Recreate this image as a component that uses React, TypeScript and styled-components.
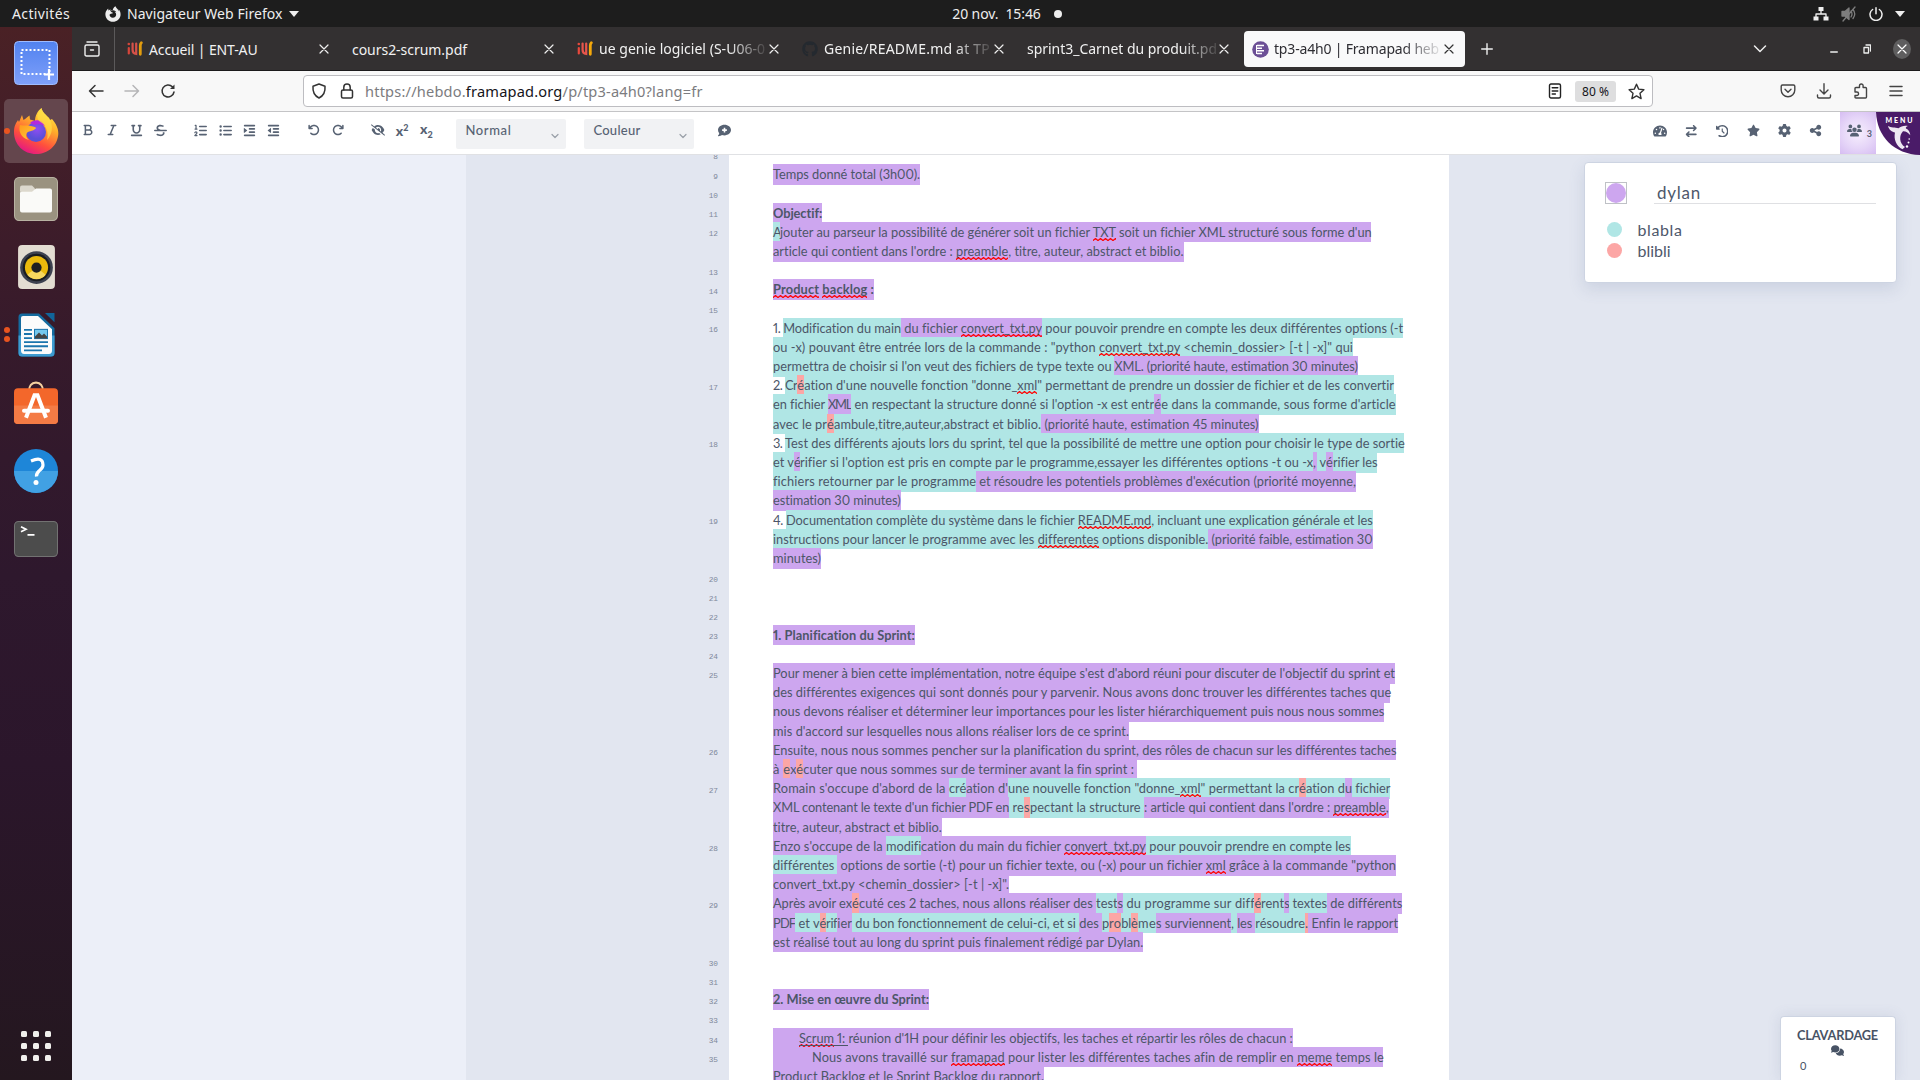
import React, { useLayoutEffect, useRef, useState } from "react";
import styled, { createGlobalStyle, css } from "styled-components";
import {
  FaBold, FaItalic, FaUnderline, FaStrikethrough, FaListOl, FaListUl, FaIndent, FaOutdent,
  FaArrowRotateLeft, FaArrowRotateRight, FaEyeSlash, FaCommentMedical,
  FaArrowRightArrowLeft, FaClockRotateLeft, FaStar, FaGear, FaShareNodes, FaUsers, FaComments,
  FaFirefoxBrowser, FaGithub,
} from "react-icons/fa6";
import { FaTachometerAlt } from "react-icons/fa";

const ui = `"Noto Sans", "Open Sans", sans-serif`;
const pad = `Lato, "Open Sans", sans-serif`;

const Global = createGlobalStyle`
  * { box-sizing: border-box; }
  html, body { margin: 0; padding: 0; overflow: hidden; }
  svg { display: block; flex: none; }
`;

/* ---------- text fitted to a given advance width ---------- */
const FitBox = styled.span<{ $w: number }>`
  display: inline-block;
  width: ${(p) => p.$w}px;
  flex: none;
  white-space: pre;
`;

function Fit({ w, n, children }: { w: number; n: number; children: React.ReactNode }) {
  const ref = useRef<HTMLSpanElement>(null);
  const [ls, setLs] = useState(0);
  useLayoutEffect(() => {
    if (ref.current) setLs((w - ref.current.getBoundingClientRect().width) / Math.max(n, 1));
  }, []);
  return (
    <FitBox $w={w}>
      <span ref={ref} style={{ letterSpacing: ls }}>{children}</span>
    </FitBox>
  );
}
const Label = ({ w, children }: { w: number; children: string }) => (
  <Fit w={w} n={children.length}>{children}</Fit>
);

/* ---------- desktop shell ---------- */
const Screen = styled.div`
  width: 1920px; height: 1080px; overflow: hidden;
  display: flex; flex-direction: column;
  font-family: ${ui};
`;
const TopBar = styled.header`
  height: 27px; background: #1d1d1d; color: #eee; flex: none;
  display: grid; grid-template-columns: 1fr auto 1fr; align-items: center;
  font-size: 14px; line-height: 27px;
`;
const TopLeft = styled.div`display: flex; align-items: center; padding-left: 12px;`;
const AppMenu = styled.div`display: flex; align-items: center; margin-left: 35px; gap: 6px;`;
const Clock = styled.div`display: flex; align-items: center; gap: 13px; padding-left: 94px;`;
const Dot = styled.i<{ $s: number; $c: string }>`
  width: ${(p) => p.$s}px; height: ${(p) => p.$s}px; border-radius: 50%; background: ${(p) => p.$c}; flex: none; display: block;
`;
const Tray = styled.div`display: flex; align-items: center; justify-content: flex-end; padding-right: 15px; gap: 12px;`;
const Caret = styled.i`
  border: 5px solid transparent; border-top: 6px solid #eee; border-bottom: 0; display: block;
`;
const Desktop = styled.div`flex: 1; display: flex; min-height: 0;`;

const Dock = styled.nav`
  width: 72px; flex: none; padding-top: 1.5px;
  background: linear-gradient(#4a2125 0%, #421e29 12%, #361a2b 30%, #2e182d 52%, #2b162b 70%, #24171f 100%);
  display: flex; flex-direction: column; align-items: center;
`;
const DockSlot = styled.div<{ $on?: boolean }>`
  position: relative; height: 68px; flex: none; width: 72px; display: flex; align-items: center; justify-content: center;
  ${(p) => p.$on && css`&::before { content: ""; position: absolute; inset: 2px 4px; border-radius: 5px; background: #64464d; }`}
  svg { position: relative; }
`;
const Running = styled.div`
  position: absolute; left: 3.5px; top: 0; bottom: 0; display: flex; flex-direction: column; justify-content: center; gap: 3px;
`;
const AppGrid = styled.div`
  margin-top: auto; margin-bottom: 19px; display: grid; grid-template-columns: repeat(3, 6px); gap: 6px;
  i { height: 6px; border-radius: 1.5px; background: #f0efec; }
`;

/* ---------- browser ---------- */
const Browser = styled.main`flex: 1; display: flex; flex-direction: column; min-width: 0; position: relative;`;
const TabBar = styled.div`
  height: 44px; flex: none; background: #333031; border-bottom: 1px solid #1c1b1c; display: flex; align-items: center; color: #f3f3f3;
`;
const Sidebar = styled.div`
  width: 43px; height: 44px; border-right: 1px solid #5c5a5b; display: flex; align-items: center; justify-content: center; margin-right: 4px; padding-right: 2px;
`;
const Tab = styled.div<{ $on?: boolean }>`
  width: ${(p) => (p.$on ? 221 : 225)}px; height: 36px; border-radius: 4px; display: flex; align-items: center;
  padding: 1px 0 0 8px; font-size: 14px; flex: none;
  background: ${(p) => (p.$on ? "#f9f9fa" : "transparent")}; color: ${(p) => (p.$on ? "#2e2d33" : "#f1f1f1")};
`;
const Fav = styled.span`width: 22px; display: flex;`;
const TabText = styled.span`
  white-space: pre; line-height: 24px;
  mask-image: linear-gradient(to right, #000 calc(100% - 36px), rgba(0, 0, 0, 0.12) 100%);
`;
const TabClose = styled.span<{ $pr?: number }>`margin-left: auto; padding-right: ${(p) => p.$pr ?? 15}px; display: flex;`;
const TabButton = styled.span<{ $ml: number }>`margin-left: ${(p) => p.$ml}px; display: flex;`;
const RoundClose = styled.span`
  margin-left: 22px; width: 18px; height: 20px; border-radius: 50%; background: #5f5e5f; display: flex; align-items: center; justify-content: center;
`;
const NavBar = styled.div`
  height: 41px; flex: none; background: #f8f8f8; border-bottom: 1px solid #c4c4c6; display: flex; align-items: center; padding-left: 16px;
`;
const NavButtons = styled.div`width: 215px; display: flex; gap: 20px; align-items: center;`;
const UrlBar = styled.div`
  width: 1350px; height: 32px; background: #fff; border: 1px solid #bdbdc1; border-radius: 4px; display: flex; align-items: center;
  padding: 0 7px; font-size: 14.6px; color: #7c7c80; gap: 12px;
  b { font-weight: 400; color: #15141a; }
`;
const Zoom = styled.span`
  margin-left: 1px; width: 41px; height: 21px; border-radius: 3px; background: #dededf; color: #15141a; font-size: 12px; line-height: 21px; text-align: center; letter-spacing: 0;
`;
const UrlText = styled.span`margin-left: -2px; line-height: 24px; flex: 1;`;
const NavRight = styled.div`margin-left: auto; padding-right: 17px; display: flex; gap: 20.3px; align-items: center;`;

/* ---------- etherpad toolbar ---------- */
const ToolBar = styled.div`
  height: 43px; flex: none; background: #fff; border-bottom: 1px solid #e0e1e4; display: flex; align-items: center; padding: 0 0 4px 4px; color: #576273;
  font-family: ${pad};
`;
const Group = styled.div`display: flex; margin-right: 16px;`;
const Tool = styled.span<{ $w?: number }>`
  width: ${(p) => p.$w ?? 24.2}px; height: 38px; padding-bottom: 1.5px; display: flex; align-items: center; justify-content: center;
`;
const Script = styled.span<{ $low?: boolean }>`
  display: flex; align-items: ${(p) => (p.$low ? "flex-end" : "flex-start")}; height: 15px; font-size: 14px; font-weight: 900;
  line-height: ${(p) => (p.$low ? 11 : 16)}px;
  ${(p) => p.$low && css`align-items: flex-start;`}
  small { font-size: 9px; line-height: 9px; margin-top: ${(p) => (p.$low ? 7 : 0)}px; }
`;
const Select = styled.div<{ $ml: number }>`
  width: 110px; height: 30px; margin: 5px 0 0 ${(p) => p.$ml}px; background: #f1f2f4; border-radius: 2px; display: flex; justify-content: space-between;
  padding: 0 7px 8px 9px; font-size: 13px; font-weight: 500; align-items: center; color: #576273;
  svg { margin-top: 13px; }
`;
const ToolsRight = styled.div`margin-left: auto; display: flex; align-items: center; height: 42px; margin-bottom: -4px;`;
const RightTools = styled.div`display: flex; padding-bottom: 3px;`;
const Users = styled.div`
  width: 36px; height: 42px; margin-left: 9px; padding: 0 4px 5px 7px; display: flex; align-items: center; justify-content: space-between;
  background: radial-gradient(circle at center, #f7effd 0%, #e6d6f8 55%, #d6bdf2 100%); font-size: 9px; font-weight: 700;
  span { padding-top: 5px; }
`;
const MenuCorner = styled.div`width: 44px; height: 43px; align-self: flex-start; svg { overflow: visible; }`;

/* ---------- pad ---------- */
const PadArea = styled.div`flex: 1; display: flex; min-height: 0; background: #e2e6f0; overflow: hidden;`;
const OuterMargin = styled.div`width: 394px; background: #eceff8; flex: none;`;
const Gutter = styled.div`width: 263px; flex: none; padding-right: 11px; height: 925px; overflow: hidden;`;
const Sheet = styled.div`
  width: 720px; flex: none; background: #fff; padding: 9.2px 0 0 44px; overflow: hidden; height: 925px;
  font-family: ${pad}; font-size: 12.8px; color: #4c5668; font-variant-numeric: proportional-nums;
`;
const Row = styled.div<{ $b?: boolean }>`
  height: 19.2px; display: flex; align-items: flex-start; line-height: ${(p) => (p.$b ? 20.4 : 21.4)}px; white-space: pre;
  font-weight: ${(p) => (p.$b ? 700 : 400)};
`;
const colours = { p: "#cda6ef", t: "#b0e6e5", r: "#fca6a5", n: "transparent" };
type C = keyof typeof colours;
const Run = styled.span<{ $c: C; $indent: number }>`
  display: flex; height: 20.6px; background: ${(p) => colours[p.$c]}; padding-left: ${(p) => p.$indent}px; flex: none;
`;
const Typo = styled.span`
  padding-bottom: 1px;
  background: url("data:image/svg+xml,%3Csvg xmlns='http://www.w3.org/2000/svg' width='5' height='3'%3E%3Cpath d='M-.5 2.900L2.500.6l3 2.300' fill='none' stroke='red' stroke-width='1.300'/%3E%3C/svg%3E") left bottom / 5px 3px repeat-x;
`;
const Under = styled.span`text-decoration: underline; text-underline-offset: 2px;`;
const LineNo = styled.div<{ $lines: number }>`
  height: ${(p) => p.$lines * 19.2}px; padding-top: 7.6px; text-align: right; line-height: 11px; font-size: 7.8px;
  font-family: "Liberation Mono", "DejaVu Sans Mono", monospace; color: #7f899b;
`;
const FirstNumber = styled.div`
  height: 9.2px; display: flex; justify-content: flex-end; align-items: flex-start;
  font: 7.8px/11px "Liberation Mono", monospace; color: #7f899b; margin-top: -3px; margin-bottom: 3px;
`;

/* segment: colour, text, right edge (px from the text margin), optional indent */
type Seg = [C, string, number, number?];
type Para = { no: number; b?: boolean; rows: Seg[][] };
const paras: Para[] = [
  { no: 9, rows: [[["p", "Temps donné total (3h00).", 147.1]]] },
  { no: 10, rows: [[]] },
  { no: 11, b: true, rows: [[["p", "Objectif:", 49.4]]] },
  { no: 12, rows: [
    [["t", "A", 7], ["p", "jouter au parseur la possibilité de générer soit un fichier ~TXT~ soit un fichier XML structuré sous forme d'un", 598.2]],
    [["p", "article qui contient dans l'ordre : ~preamble~, titre, auteur, abstract et biblio.", 411.1]],
  ] },
  { no: 13, rows: [[]] },
  { no: 14, b: true, rows: [[["p", "~Product~ ~backlog~ :", 101]]] },
  { no: 15, rows: [[]] },
  { no: 16, rows: [
    [["n", "1. ", 10.2], ["t", "Modification du main", 128], ["p", " du fichier ~convert_txt.py~", 269], ["t", " pour pouvoir prendre en compte les deux différentes options (-t", 630]],
    [["t", "ou -x) pouvant être entrée lors de la commande : \"python ~convert_txt.py~ <chemin_dossier> [-t | -x]\" qui", 580]],
    [["t", "permettra de choisir si l'on veut des fichiers de type texte ou ", 341.3], ["p", "XML. (priorité haute, estimation 30 minutes)", 585.2]],
  ] },
  { no: 17, rows: [
    [["n", "2. ", 12.1], ["t", "Cr", 24.2], ["r", "é", 31.2], ["t", "ation d'une nouvelle fonction \"donne_~xml~\" permettant de prendre un dossier de fichier et de les convertir", 621]],
    [["t", "en fichier ", 54.9], ["p", "XML", 78.2], ["t", " en respectant la structure donné si l'option -x est entr", 381.3], ["p", "é", 388.3], ["t", "e dans la commande, sous forme d'article", 623]],
    [["t", "avec le pr", 54], ["r", "é", 61], ["t", "ambule,titre,auteur,abstract et biblio.", 268.2], ["p", " (priorité haute, estimation 45 minutes)", 486]],
  ] },
  { no: 18, rows: [
    [["n", "3. ", 12.1], ["t", "Test des différents ajouts lors du sprint, tel que la possibilité de mettre une option pour choisir le type de sortie", 631.3]],
    [["t", "et v", 21], ["p", "é", 27], ["t", "rifier si l'option est pris en compte par le programme,essayer les différentes options -t ou -x", 540], ["p", ",", 543.8], ["t", " v", 553], ["p", "é", 560], ["t", "rifier les", 604.3]],
    [["t", "fichiers retourner par le programme", 203], ["p", " et résoudre les potentiels problèmes d'exécution (priorité moyenne,", 583.3]],
    [["p", "estimation 30 minutes)", 128]],
  ] },
  { no: 19, rows: [
    [["n", "4. ", 13], ["t", "Documentation complète du système dans le fichier ~README.md~, incluant une explication générale et les", 600]],
    [["t", "instructions pour lancer le programme avec les ~differentes~ options disponible.", 435.3], ["p", " (priorité faible, estimation 30", 600]],
    [["p", "minutes)", 48]],
  ] },
  { no: 20, rows: [[]] },
  { no: 21, rows: [[]] },
  { no: 22, rows: [[]] },
  { no: 23, b: true, rows: [[["p", "1. Planification du Sprint:", 142]]] },
  { no: 24, rows: [[]] },
  { no: 25, rows: [
    [["p", "Pour mener à bien cette implémentation, notre équipe s'est d'abord réuni pour discuter de l'objectif du sprint et", 622]],
    [["p", "des différentes exigences qui sont donnés pour y parvenir. Nous avons donc trouver les différentes taches que", 617.3]],
    [["p", "nous devons réaliser et déterminer leur importances pour les lister hiérarchiquement puis nous nous sommes", 611.3]],
    [["p", "mis d'accord sur lesquelles nous allons réaliser lors de ce sprint.", 356.1]],
  ] },
  { no: 26, rows: [
    [["p", "Ensuite, nous nous sommes pencher sur la planification du sprint, des rôles de chacun sur les différentes taches", 623]],
    [["p", "à ", 10.2], ["r", "e", 17.2], ["p", "x", 23.3], ["r", "é", 30.3], ["p", "cuter que nous sommes sur de terminer avant la fin sprint : ", 364]],
  ] },
  { no: 27, rows: [
    [["p", "Romain s'occupe d'abord de la ", 176], ["t", "cré", 193.2], ["p", "ation d'", 235.1], ["t", "une nouvelle fonction \"donne_~xml~\" permettant la cr", 526], ["r", "é", 533], ["t", "ation d", 572.1], ["p", "u", 579.1], ["t", " fichier", 617.3]],
    [["p", "XML contenant le texte d'un fichier PDF en", 236], ["t", " re", 251], ["r", "s", 257], ["t", "pectant la structure ", 371], ["p", ": article qui contient dans l'ordre : ~preamble~,", 616]],
    [["p", "titre, auteur, abstract et biblio.", 169]],
  ] },
  { no: 28, rows: [
    [["p", "Enzo s'occupe de la ", 113.1], ["t", "modifi", 148], ["p", "cation du main du fichier ~convert_txt.py~", 373], ["t", " pour pouvoir prendre en compte les", 577.7]],
    [["t", "différentes ", 64.2], ["p", " options de sortie (-t) pour un fichier texte, ou (-x) pour un fichier ~xml~ grâce à la commande \"python", 623]],
    [["p", "convert_txt.py <chemin_dossier> [-t | -x]\".", 236]],
  ] },
  { no: 29, rows: [
    [["p", "Après avoir ex", 79.1], ["r", "é", 86.1], ["p", "cuté ces 2 taches, nous allons réaliser des ", 323.1], ["t", "test", 344.5], ["p", "s", 350], ["t", " du programme sur diff", 481.4], ["r", "é", 488], ["t", "rent", 511.2], ["p", "s", 516.3], ["t", " textes", 554], ["p", " de différents", 629]],
    [["p", "PDF", 22.3], ["t", " et v", 46.6], ["r", "é", 53.1], ["t", "rif", 64.2], ["p", "ier", 79.1], ["t", " du bon fonctionnement de celui-ci, et si ", 306.3], ["p", "des ", 329.1], ["t", "p", 336.1], ["r", "ro", 348.2], ["t", "bl", 358], ["r", "è", 365], ["t", "me", 383.1], ["p", "s surviennent", 458.1], ["t", ", ", 464.2], ["p", "les ", 482.3], ["t", "résoudre", 532.1], ["r", ".", 535.4], ["p", " Enfin le rapport", 624.8]],
    [["p", "est réalisé tout au long du sprint puis finalement rédigé par Dylan.", 370.1]],
  ] },
  { no: 30, rows: [[]] },
  { no: 31, rows: [[]] },
  { no: 32, b: true, rows: [[["p", "2. Mise en œuvre du Sprint:", 156]]] },
  { no: 33, rows: [[]] },
  { no: 34, rows: [[["p", "_~Scrum~ 1: _", 75.4, 26], ["p", "réunion d'1H pour définir les objectifs, les taches et répartir les rôles de chacun :", 520]]] },
  { no: 35, rows: [
    [["p", "Nous avons travaillé sur ~framapad~ pour lister les différentes taches afin de remplir en ~meme~ temps le", 610.3, 39]],
    [["p", "Product Backlog et le Sprint Backlog du rapport.", 271]],
  ] },
];

function markup(s: string): React.ReactNode {
  return s.split("~").map((t, i) => (i % 2 ? <Typo key={i}>{t}</Typo> : t));
}
function Line({ segs, bold }: { segs: Seg[]; bold?: boolean }) {
  let x = 0;
  return (
    <Row $b={bold}>
      {segs.map(([c, text, end, indent = 0], i) => {
        const w = end - x - indent;
        x = end;
        const ul = text.startsWith("_~");
        const body = ul ? text.slice(1, -1) : text;
        return (
          <Run key={i} $c={c} $indent={indent}>
            <Fit w={w} n={body.replace(/~/g, "").length}>{ul ? <Under>{markup(body)}</Under> : markup(body)}</Fit>
          </Run>
        );
      })}
    </Row>
  );
}

/* ---------- floating panels ---------- */
const Popup = styled.div`
  position: absolute; left: 1512px; top: 135px; width: 313px; height: 121px; background: #fff; border: 1px solid #cdd4e2; border-radius: 4px;
  box-shadow: 0 6px 16px rgba(90, 105, 150, 0.16); font-family: ${pad}; color: #4e586b; padding: 18px 20px 0 20px;
`;
const Me = styled.div`display: flex; align-items: flex-start; font-size: 17px;`;
const Swatch = styled.div`width: 22px; height: 22px; border: 1px solid #bfc1c6; display: flex; align-items: center; justify-content: center; margin-top: 1px;`;
const Name = styled.div`margin-left: 27px; flex: 1; height: 22.5px; border-bottom: 1px solid #dfe0e3; padding-left: 3px; line-height: 24px;`;
const Others = styled.div`margin-top: 15px; padding-left: 1.5px; font-size: 16px;`;
const Other = styled.div`display: flex; align-items: center; gap: 16px; height: 21px; line-height: 21px;`;
const Chat = styled.div`
  position: absolute; left: 1708px; bottom: 0; width: 116px; height: 64px; background: #fff; border: 1px solid #cdd4e2; border-bottom: 0; border-radius: 4px 4px 0 0;
  box-shadow: 0 0 14px rgba(90, 105, 150, 0.14); font-family: ${pad}; color: #485365; display: flex; flex-direction: column; align-items: center; padding: 9px 1px 0 0;
  font-size: 12.8px; font-weight: 700; line-height: 18px;
`;
const Count = styled.span`align-self: flex-start; margin-left: 19px; font-weight: 400; font-size: 11px; line-height: 18px;`;

/* ---------- icons ---------- */
const S = ({ s = 16, h, children, c = "currentColor", w = 1.3 }: { s?: number; h?: number; children: React.ReactNode; c?: string; w?: number }) => (
  <svg width={s} height={h ?? s} viewBox={`0 0 ${s} ${h ?? s}`} fill="none" stroke={c} strokeWidth={w} strokeLinecap="round" strokeLinejoin="round">{children}</svg>
);
const X = ({ c = "#eee" }: { c?: string }) => <S s={10} c={c} w={1.2}><path d="M1 1l8 8M9 1l-8 8" /></S>;
const UnivFav = ({ dim }: { dim?: boolean }) => (
  <svg width="16" height="16" viewBox="0 0 16 16" fill="none" opacity={dim ? 0.9 : 1}>
    <circle cx="1.800" cy="3" r="1.300" fill="#e8483c" />
    <path d="M1.800 7v5.500" stroke="#e8483c" strokeWidth="2.200" strokeLinecap="round" />
    <path d="M5.600 2.500v6.500q0 3.500 3.600 4V2.500" stroke="#e8554c" strokeWidth="2.200" strokeLinecap="round" />
    <path d="M14.300 1.800q-1 1-1 3v8.500" stroke="#f5a80b" strokeWidth="2.800" strokeLinecap="round" />
  </svg>
);
const FramaFav = () => (
  <svg width="17" height="17" viewBox="0 0 17 17"><circle cx="8.500" cy="8.500" r="8.300" fill="#6c4f96" />
    <path d="M5 4.500h7M5 7.200h5M5 9.800h7M5 12.400h5" stroke="#fff" strokeWidth="1.500" /><path d="M4.500 4v9" stroke="#fff" /></svg>
);
const ScreenshotApp = () => (
  <svg width="44" height="44" viewBox="0 0 44 44"><defs><linearGradient id="sc" x2="0" y2="1"><stop stopColor="#5182ef" /><stop offset="1" stopColor="#7fa0fa" /></linearGradient></defs>
    <rect x=".5" y=".5" width="43" height="43" rx="4" fill="url(#sc)" stroke="#9fbcff" />
    <rect x="7.500" y="9" width="28" height="24" fill="none" stroke="#fff" strokeWidth="2" strokeDasharray="2 2" />
    <path d="M35 28v11M30 33.500h10" stroke="#fff" strokeWidth="2.200" /></svg>
);
const FirefoxApp = () => (
  <svg width="46" height="47" viewBox="0 0 46 47"><defs>
    <linearGradient id="f1" x1=".8" y1="0" x2=".3" y2="1"><stop stopColor="#fff04a" /><stop offset=".35" stopColor="#ffb02a" /><stop offset=".7" stopColor="#ff4f3d" /><stop offset="1" stopColor="#e31587" /></linearGradient>
    <radialGradient id="f2" cx=".55" cy=".35"><stop stopColor="#8f4df2" /><stop offset="1" stopColor="#5a50d8" /></radialGradient>
    <linearGradient id="f3" x2="1" y2="1"><stop stopColor="#ff9a1e" /><stop offset="1" stopColor="#ffcf3a" /></linearGradient></defs>
    <path d="M28.500 1c1 5 5 7 7.500 10l1 2 2-1c4 5 6.500 9 6.300 15C44.500 39 35 47 23 47S1 38 1 25c0-6 2-9 4-12l1 2 3-7 1.500 5c3-2 4-3 6-4.500l.5 4q3 .5 5 1.500c0-5 2.500-10 6.500-13z" fill="url(#f1)" />
    <circle cx="23" cy="25" r="10" fill="url(#f2)" />
    <path d="M17 16c4-4 12-4 15 3-4-2-8-2-11-1z" fill="#b42bdc" />
    <path d="M7 18c4 1 8 0 11 1s5 1 5 2c-1 2-5 3-8 4-2 1-3 5 1 8C8 31 5 24 7 18z" fill="url(#f3)" />
    <path d="M28.500 1c1 5 5 7 7.500 10 5 8 3 17-2 22 2-8-1-14-5-17-5-2-7-8-.5-15z" fill="#ffe14a" opacity=".65" /></svg>
);
const FilesApp = () => (
  <svg width="44" height="44" viewBox="0 0 44 42" preserveAspectRatio="none"><rect x=".5" y=".5" width="43" height="41" rx="4.500" fill="#9a9280" stroke="#b8b2a2" />
    <path d="M6 14V10q0-2 2-2h10l3 3v5z" fill="#dcd8cd" /><path d="M6 15q0-1 2-1h10l4-3h14q2 0 2 2v19q0 2-2 2H8q-2 0-2-2z" fill="#fafaf8" /></svg>
);
const MusicApp = () => (
  <svg width="37" height="44" viewBox="0 0 36 43"><rect width="36" height="43" rx="4" fill="#e3ddd2" /><circle cx="18" cy="22" r="16" fill="#3d4250" /><circle cx="18" cy="22" r="13.500" fill="#1a1d22" />
    <circle cx="18" cy="22" r="11.300" fill="#eab90c" /><path d="M18 22L9 29a11.300 11.300 0 0 0 18 0z" fill="#f6d75e" /><circle cx="18" cy="22" r="5" fill="#1d1f22" /></svg>
);
const WriterApp = () => (
  <svg width="37" height="44" viewBox="0 0 37 43" preserveAspectRatio="none"><path d="M4 .5h17L36.500 15v24q0 3.500-3.500 3.500H4Q.5 42.500.5 39V4Q.5.5 4 .5z" fill="#146b9f" /><path d="M.5 22h36v17q0 3.500-3.500 3.500H4Q.5 42.500.5 39z" fill="#3d9bd0" /><path d="M27 0h9.500v9z" fill="#11659a" />
    <path d="M5 3h15L34 16v21q0 3-3 3H6q-3 0-3-3V5q0-2 2-2z" fill="#fbfbfb" />
    <path d="M6 16.500h8M6 20.500h8M6 24.500h8M6 28.500h24M6 32.500h24M6 36.500h18" stroke="#1b75ad" strokeWidth="1.800" /><rect x="16.500" y="16" width="13" height="9" fill="#74c8ee" stroke="#1b75ad" /><path d="M17 25v-2l4-4 3 3 2-2 3 3v2z" fill="#444" /></svg>
);
const SoftwareApp = () => (
  <svg width="44" height="44" viewBox="0 0 44 43" preserveAspectRatio="none"><path d="M15 10q0-8 7-8.500 7 .5 7 8.500" fill="none" stroke="#f6d1a0" strokeWidth="1.800" /><rect y="7" width="44" height="35" rx="4" fill="#f3672b" /><path d="M0 24h44v14q0 4-4 4H4q-4 0-4-4z" fill="#f47b45" />
    <path d="M12 36l8.500-22h3L32 36" fill="none" stroke="#fff" strokeWidth="4" /><path d="M10 29h24" stroke="#fff" strokeWidth="4" strokeLinecap="round" /></svg>
);
const HelpApp = () => (
  <svg width="44" height="44" viewBox="0 0 44 44"><circle cx="22" cy="22" r="22" fill="#1e86d8" /><path d="M0 22h44a22 22 0 0 1-44 0z" fill="#41a1e4" />
    <path d="M17 12q12-5 12 4 0 3-4 6-3 3-2.500 5.500" fill="none" stroke="#fff" strokeWidth="3.200" /><circle cx="22" cy="33.500" r="2.500" fill="#fff" /></svg>
);
const TermApp = () => (
  <svg width="44" height="36" viewBox="0 0 44 35" preserveAspectRatio="none"><rect x=".5" y=".5" width="43" height="34" rx="4" fill="#4c4c4c" stroke="#727272" />
    <path d="M7 5.500l5 2.500-5 2.500M13.500 13.500h7" fill="none" stroke="#fff" strokeWidth="1.700" /></svg>
);
const MenuArt = () => (
  <svg width="44" height="43" viewBox="0 0 44 43"><path d="M0 0h44v43C18 42 1 25 0 0z" fill="#4a1b68" />
    <text x="9.500" y="10.500" fontFamily="Lato, sans-serif" fontWeight="900" fontSize="7" textLength="27" fill="#fff">MENU</text>
    <path d="M12 14c3 2 7 1 10.500 2.300C25 14 28.500 13.300 32 14c-2 .6-2.500 1.600-2 2.600 2.500 1.200 4 3.400 4.300 6.600-2.500-2.800-4.500-4.200-7.300-4-4 4-4 12 2 15.800l-2.500 2.300C20 34 17.500 27 19 20.500c-3-.6-6-2.500-7-6.500z" fill="#eee8f2" />
    <circle cx="32.500" cy="30.500" r="1" fill="#fff" /><circle cx="31" cy="34.500" r="1.200" fill="#fff" /><circle cx="33.200" cy="27" r=".8" fill="#fff" /></svg>
);

const tools: React.ReactNode[][] = [
  [<FaBold size={12} />, <FaItalic size={12} />, <FaUnderline size={13} />, <FaStrikethrough size={13} />],
  [<FaListOl size={13} />, <FaListUl size={13} />, <FaIndent size={13} />, <FaOutdent size={13} />],
  [<FaArrowRotateLeft size={12} />, <FaArrowRotateRight size={12} />],
  [<FaEyeSlash size={14} />, <Script>x<small>2</small></Script>, <Script $low>x<small>2</small></Script>],
];
const rightTools = [
  <FaTachometerAlt size={14} />, <FaArrowRightArrowLeft size={12.5} />, <FaClockRotateLeft size={12.5} />,
  <FaStar size={13} />, <FaGear size={13} />, <FaShareNodes size={13} />,
];
const Chevron = () => <S s={8} c="#9aa0a8" w={1.2}><path d="M1 2.500l3 3 3-3" /></S>;

export default function App() {
  return (
    <Screen>
      <Global />
      <TopBar>
        <TopLeft>
          <Label w={58}>Activités</Label>
          <AppMenu>
            <FaFirefoxBrowser size={16} />
            <Label w={155.5}>Navigateur Web Firefox</Label>
            <Caret />
          </AppMenu>
        </TopLeft>
        <Clock><Label w={88.5}>20 nov.  15:46</Label><Dot $s={8} $c="#eee" /></Clock>
        <Tray>
          <S s={16} c="#eee"><path d="M8 4v4M3 12V8h10v4" /><g fill="#eee" stroke="none"><rect x="5.500" y="1" width="5" height="4" /><rect x=".5" y="10.500" width="5" height="4" /><rect x="10.500" y="10.500" width="5" height="4" /></g></S>
          <S s={16} c="#7d7d7d"><path d="M1 5.500h3l4-3.500v11.500L4 10H1z" fill="#7d7d7d" /><path d="M10 5q2 3 0 6M12 3.500q3.500 4.500 0 9M2 15L14 1" /></S>
          <S s={14} c="#eee" w={1.5}><path d="M7 .8v6M3.600 2.500a6 6 0 1 0 6.800 0" /></S>
          <Caret />
        </Tray>
      </TopBar>
      <Desktop>
        <Dock>
          <DockSlot><ScreenshotApp /></DockSlot>
          <DockSlot $on><FirefoxApp /><Running><Dot $s={6} $c="#e95420" /></Running></DockSlot>
          <DockSlot><FilesApp /></DockSlot>
          <DockSlot><MusicApp /></DockSlot>
          <DockSlot><WriterApp /><Running><Dot $s={6} $c="#e95420" /><Dot $s={6} $c="#e95420" /></Running></DockSlot>
          <DockSlot><SoftwareApp /></DockSlot>
          <DockSlot><HelpApp /></DockSlot>
          <DockSlot><TermApp /></DockSlot>
          <AppGrid>{Array.from({ length: 9 }, (_, i) => <i key={i} />)}</AppGrid>
        </Dock>
        <Browser>
          <TabBar>
            <Sidebar><S s={16} c="#eee" w={1.4}><path d="M3 1h10M1 5.500q0-1.500 1.500-1.500h11q1.500 0 1.500 1.500v8q0 1.500-1.500 1.500h-11Q1 15 1 13.500zM6.500 9h3" /></S></Sidebar>
            <Tab><Fav><UnivFav dim /></Fav><Label w={108.5}>Accueil | ENT-AU</Label><TabClose><X /></TabClose></Tab>
            <Tab><Label w={115}>cours2-scrum.pdf</Label><TabClose><X /></TabClose></Tab>
            <Tab><Fav><UnivFav /></Fav><TabText><Label w={166}>ue genie logiciel (S-U06-0</Label></TabText><TabClose><X /></TabClose></Tab>
            <Tab><Fav><FaGithub size={16} color="#24292f" /></Fav><TabText><Label w={166}>Genie/README.md at TP</Label></TabText><TabClose><X /></TabClose></Tab>
            <Tab><TabText><Label w={190}>sprint3_Carnet du produit.pd</Label></TabText><TabClose><X /></TabClose></Tab>
            <Tab $on><Fav><FramaFav /></Fav><TabText><Label w={165}>tp3-a4h0 | Framapad heb</Label></TabText><TabClose $pr={11}><X c="#333" /></TabClose></Tab>
            <TabButton $ml={16}><S s={12} c="#eee" w={1.4}><path d="M6 .7v10.600M.7 6h10.600" /></S></TabButton>
            <TabButton $ml={260}><S s={14} c="#eee" w={1.5}><path d="M1.500 4l5.500 5.500L12.500 4" /></S></TabButton>
            <TabButton $ml={63}><S s={8} c="#eee" w={1.6}><path d="M.8 7h6.400" /></S></TabButton>
            <TabButton $ml={25}><S s={8} h={10} c="#eee" w={1.3}><path d="M1 3.500h4.500v5.500H1zM3 1h4.500v6" /></S></TabButton>
            <RoundClose><X c="#fff" /></RoundClose>
          </TabBar>
          <NavBar>
            <NavButtons>
              <S s={16} c="#333" w={1.5}><path d="M15 8H1.500M7 2.500L1.500 8 7 13.500" /></S>
              <S s={16} c="#b5b5b7" w={1.5}><path d="M1 8h13.500M9 2.500L14.500 8 9 13.500" /></S>
              <S s={16} c="#333" w={1.5}><path d="M14 9a6 6 0 1 1-1.600-5.200" /><path d="M14.500 1.500v4.500H10z" fill="#333" stroke="none" /></S>
            </NavButtons>
            <UrlBar>
              <S s={16} c="#333" w={1.5}><path d="M8 1l6 2.200C14.500 9 12 13 8 15 4 13 1.500 9 2 3.200z" /></S>
              <S s={16} c="#333" w={1.5}><rect x="2.500" y="7" width="11" height="8" rx="1.500" /><path d="M4.800 7V4.200a3.200 3.200 0 0 1 6.400 0V7" /></S>
              <UrlText><Fit w={337} n={41}>https://hebdo.<b>framapad.org</b>/p/tp3-a4h0?lang=fr</Fit></UrlText>
              <S s={14} h={16} c="#222" w={1.4}><rect x="1.500" y="1" width="11" height="14" rx="1.500" /><path d="M4.200 4.800h5.600M4.200 8h5.600M4.200 11h3.200" /></S>
              <Zoom>80 %</Zoom>
              <S s={17} c="#333" w={1.4}><path d="M8.500 1.200l2.200 4.900 5.200.6-3.900 3.600 1.100 5.300-4.600-2.700-4.600 2.700L5 10.300 1.100 6.700l5.200-.6z" /></S>
            </UrlBar>
            <NavRight>
              <S s={16} c="#444" w={1.4}><path d="M2.500 2h11q1.300 0 1.300 1.300V7a6.800 6.800 0 0 1-13.600 0V3.300Q1.200 2 2.500 2zM5 6.300l3 3 3-3" /></S>
              <S s={16} c="#444" w={1.4}><path d="M8 .8v10M4 7l4 4 4-4M1.500 12v1.500q0 1.500 1.500 1.500h10q1.500 0 1.500-1.500V12" /></S>
              <S s={16} c="#444" w={1.4}><path d="M2 9V5.500q0-1 1-1h3.500V2.800a1.800 1.800 0 0 1 3.600 0v1.700h2.400q1 0 1 1V14q0 1-1 1H3q-1 0-1-1v-1.500h1.800a1.750 1.750 0 0 0 0-3.500z" /></S>
              <S s={14} c="#444" w={1.5}><path d="M1 2.500h12M1 7h12M1 11.500h12" /></S>
            </NavRight>
          </NavBar>
          <ToolBar>
            {tools.map((g, i) => <Group key={i}>{g.map((t, j) => <Tool key={j}>{t}</Tool>)}</Group>)}
            <Select $ml={2}><Label w={46}>Normal</Label><Chevron /></Select>
            <Select $ml={18}><Label w={47}>Couleur</Label><Chevron /></Select>
            <Tool $w={60}><FaCommentMedical size={13} /></Tool>
            <ToolsRight>
              <RightTools>{rightTools.map((t, i) => <Tool key={i} $w={31.1}>{t}</Tool>)}</RightTools>
              <Users><FaUsers size={15} /><span>3</span></Users>
              <MenuCorner><MenuArt /></MenuCorner>
            </ToolsRight>
          </ToolBar>
          <PadArea>
            <OuterMargin />
            <Gutter>
              <FirstNumber>8</FirstNumber>
              {paras.map((p) => <LineNo key={p.no} $lines={p.rows.length}>{p.no}</LineNo>)}
            </Gutter>
            <Sheet>
              {paras.map((p) => p.rows.map((r, i) => <Line key={`${p.no}-${i}`} segs={r} bold={p.b} />))}
            </Sheet>
          </PadArea>
          <Popup>
            <Me><Swatch><Dot $s={20} $c="#cda6ef" /></Swatch><Name><Label w={44}>dylan</Label></Name></Me>
            <Others>
              <Other><Dot $s={15} $c="#b0e6e5" /><Label w={45}>blabla</Label></Other>
              <Other><Dot $s={15} $c="#fca6a5" /><Label w={33}>blibli</Label></Other>
            </Others>
          </Popup>
          <Chat><Label w={81}>CLAVARDAGE</Label><FaComments size={13} /><Count>0</Count></Chat>
        </Browser>
      </Desktop>
    </Screen>
  );
}
